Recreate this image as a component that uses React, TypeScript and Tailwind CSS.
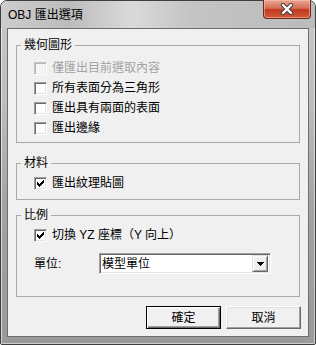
import type { ReactNode } from 'react'

const font = 'font-["Liberation_Sans","Noto_Sans_CJK_TC",sans-serif]'

function CheckBox({ checked = false, disabled = false }: { checked?: boolean; disabled?: boolean }) {
  return (
    <span
      className={`flex h-[13px] w-[13px] shrink-0 items-center justify-center border border-b-white border-r-white ${
        disabled
          ? 'border-l-[#c4c4c4] border-t-[#c4c4c4] bg-[#f4f4f4] shadow-[inset_1px_1px_0_#b5b5b5,inset_-1px_-1px_0_#ececec]'
          : 'border-l-[#a0a0a0] border-t-[#a0a0a0] bg-white shadow-[inset_1px_1px_0_#696969,inset_-1px_-1px_0_#e3e3e3]'
      }`}
    >
      {checked && (
        <svg width="7" height="7" viewBox="0 0 7 7" shapeRendering="crispEdges">
          <path d="M0 2 L2 4 L6 0 L7 0 L7 3 L2 7 L0 5 Z" fill="#000" />
        </svg>
      )}
    </span>
  )
}

function Row({ children, checked, disabled }: { children: ReactNode; checked?: boolean; disabled?: boolean }) {
  return (
    <div className="flex h-[20px] items-center gap-[5px]">
      <CheckBox checked={checked} disabled={disabled} />
      <span className={`text-[12px] leading-[14px] ${disabled ? 'text-[#a3a3a3]' : 'text-black'}`}>{children}</span>
    </div>
  )
}

function Group({ title, className, children }: { title: string; className: string; children: ReactNode }) {
  return (
    <fieldset className={`mx-[8px] border border-[#a9a9a9] p-0 ${className}`}>
      <legend className="ml-[4px] px-[3px] text-[12px] leading-[14px] text-black">{title}</legend>
      {children}
    </fieldset>
  )
}

function Button({ children, primary = false }: { children: ReactNode; primary?: boolean }) {
  return (
    <button
      className={`h-[23px] w-[75px] bg-[#f0f0f0] text-[12px] leading-[14px] text-black ${
        primary
          ? 'border border-black shadow-[inset_1px_1px_0_#ffffff,inset_-1px_-1px_0_#696969,inset_-2px_-2px_0_#a0a0a0]'
          : 'border border-b-[#696969] border-l-white border-r-[#696969] border-t-white shadow-[inset_-1px_-1px_0_#a0a0a0,inset_1px_1px_0_#e3e3e3]'
      }`}
    >
      {children}
    </button>
  )
}

export default function App() {
  return (
    <div className={`h-[345px] w-[316px] bg-white ${font}`}>
      <div className="relative flex h-full flex-col rounded-t-[7px] rounded-b-[2px] border border-[#3f3f3f] bg-[linear-gradient(to_bottom,#c9c9c9,#bdbdbd_30%,#a3a3a3_60%,#9a9a9a)] shadow-[inset_1px_1px_0_rgba(255,255,255,0.6),inset_-1px_-1px_0_rgba(255,255,255,0.5)]">
        <div className="flex h-[27px] items-center rounded-t-[6px] bg-[linear-gradient(to_right,#cdcdcd,#bcbcbc_22%,#dadada_42%,#c4c4c4_60%,#bbbbbb)] pl-[7px] pt-[1px]">
          <span className="text-[12px] leading-[14px] text-black">OBJ 匯出選項</span>
        </div>

        <div className="absolute right-[4px] -top-px flex h-[19px] w-[48px] items-center justify-center rounded-b-[4px] border border-t-0 border-[#6b2a1e] bg-[linear-gradient(to_bottom,#e9a896,#d46f55_45%,#c0391f_55%,#d35b3c)] shadow-[inset_0_0_0_1px_rgba(255,200,180,0.5)]">
          <svg width="14" height="12" viewBox="0 0 14 12">
            <path d="M3 2 L11 10 M11 2 L3 10" stroke="#3d3d3d" strokeWidth="4.2" strokeLinecap="round" />
            <path d="M3 2 L11 10 M11 2 L3 10" stroke="#ffffff" strokeWidth="2.4" strokeLinecap="round" />
          </svg>
        </div>

        <div className="mx-[6px] mb-[7px] flex flex-1 flex-col border border-[#6e6e6e] bg-[#f0f0f0]">
          <Group title="幾何圖形" className="mt-[9px] h-[105px]">
            <div className="pl-[17px] pt-[6px]">
              <Row disabled>僅匯出目前選取內容</Row>
              <Row>所有表面分為三角形</Row>
              <Row>匯出具有兩面的表面</Row>
              <Row>匯出邊緣</Row>
            </div>
          </Group>

          <Group title="材料" className="mt-[13px] h-[44px]">
            <div className="pl-[17px] pt-[3px]">
              <Row checked>匯出紋理貼圖</Row>
            </div>
          </Group>

          <Group title="比例" className="mt-[8px] h-[89px]">
            <div className="pl-[17px] pt-[3px]">
              <Row checked>切換 YZ 座標（Y 向上）</Row>
              <div className="mt-[8px] flex items-center">
                <span className="w-[65px] text-[12px] leading-[14px] text-black">單位:</span>
                <div className="flex h-[21px] w-[172px] items-center border border-b-white border-l-[#a0a0a0] border-r-white border-t-[#a0a0a0] bg-white pl-[2px] shadow-[inset_1px_1px_0_#696969,inset_-1px_-1px_0_#e3e3e3]">
                  <span className="flex-1 text-[12px] leading-[14px] text-black">模型單位</span>
                  <span className="mr-[2px] flex h-[17px] w-[16px] items-center justify-center border border-b-[#696969] border-l-[#e3e3e3] border-r-[#696969] border-t-[#e3e3e3] bg-[#f0f0f0] shadow-[inset_1px_1px_0_#ffffff,inset_-1px_-1px_0_#a0a0a0]">
                    <svg width="7" height="4" viewBox="0 0 7 4" shapeRendering="crispEdges">
                      <path d="M0 0 H7 L3.5 4 Z" fill="#000" />
                    </svg>
                  </span>
                </div>
              </div>
            </div>
          </Group>

          <div className="mt-[9px] flex justify-end gap-[5px] pr-[7px]">
            <Button primary>確定</Button>
            <Button>取消</Button>
          </div>
        </div>
      </div>
    </div>
  )
}
